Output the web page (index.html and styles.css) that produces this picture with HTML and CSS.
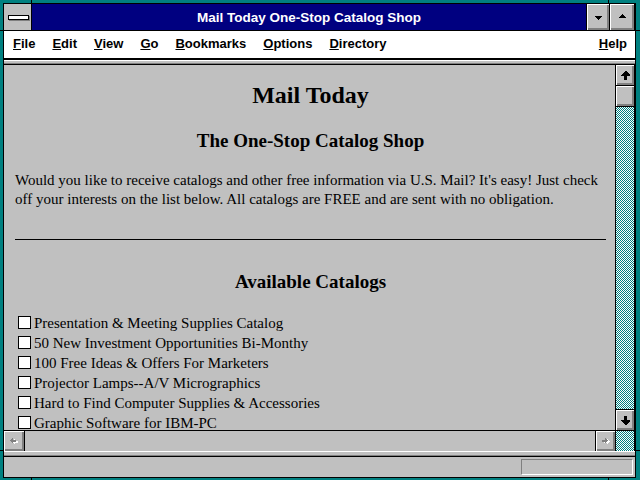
FILE: index.html
```html
<!DOCTYPE html>
<html>
<head>
<meta charset="utf-8">
<title>Mail Today One-Stop Catalog Shop</title>
<link rel="stylesheet" href="styles.css">
</head>
<body>
<div class="win">
  <div class="titlebar">
    <div class="sysbox"><span class="sysbar"></span></div>
    <div class="title">Mail Today One-Stop Catalog Shop</div>
    <div class="tbtn"><svg class="tri-down" width="7" height="4" viewBox="0 0 7 4" shape-rendering="crispEdges"><polygon points="0,0 7,0 3.5,4" fill="#000"/></svg></div>
    <div class="tbtn max"><svg class="tri-up" width="7" height="4" viewBox="0 0 7 4" shape-rendering="crispEdges"><polygon points="3.5,0 7,4 0,4" fill="#000"/></svg></div>
  </div>
  <div class="menubar">
    <span class="mi"><u>F</u>ile</span>
    <span class="mi"><u>E</u>dit</span>
    <span class="mi"><u>V</u>iew</span>
    <span class="mi"><u>G</u>o</span>
    <span class="mi"><u>B</u>ookmarks</span>
    <span class="mi"><u>O</u>ptions</span>
    <span class="mi"><u>D</u>irectory</span>
    <span class="mi help"><u>H</u>elp</span>
  </div>
  <div class="strip"></div>
  <div class="viewport">
    <div class="page">
      <h1 class="head">Mail Today</h1>
      <h2 class="sub">The One-Stop Catalog Shop</h2>
      <p class="intro">Would you like to receive catalogs and other free information via U.S. Mail? It's easy! Just check off your interests on the list below. All catalogs are FREE and are sent with no obligation.</p>
      <hr class="rule">
      <h2 class="sub sub2">Available Catalogs</h2>
      <div class="list">
        <div class="item"><span class="cb"></span>Presentation &amp; Meeting Supplies Catalog</div>
        <div class="item"><span class="cb"></span>50 New Investment Opportunities Bi-Monthy</div>
        <div class="item"><span class="cb"></span>100 Free Ideas &amp; Offers For Marketers</div>
        <div class="item"><span class="cb"></span>Projector Lamps--A/V Micrographics</div>
        <div class="item"><span class="cb"></span>Hard to Find Computer Supplies &amp; Accessories</div>
        <div class="item"><span class="cb"></span>Graphic Software for IBM-PC</div>
      </div>
    </div>
    <div class="vscroll">
      <div class="face vup"><svg width="9" height="9" viewBox="0 0 9 9" shape-rendering="crispEdges"><polygon points="4,0 5,0 9,4 9,5 6,5 6,9 3,9 3,5 0,5 0,4" fill="#000"/></svg></div>
      <div class="face vthumb"></div>
      <div class="vtrack"></div>
      <div class="face vdown"><svg width="9" height="9" viewBox="0 0 9 9" shape-rendering="crispEdges"><polygon points="3,0 6,0 6,4 9,4 9,5 5,9 4,9 0,5 0,4 3,4" fill="#000"/></svg></div>
    </div>
  </div>
  <div class="hscroll">
    <div class="face hleft"><svg width="8" height="8" viewBox="0 0 8 8" shape-rendering="crispEdges"><polygon points="1,3.5 4,0.5 4,2.5 7,2.5 7,4.5 4,4.5 4,6.5" fill="#fff" transform="translate(1,1)"/><polygon points="0,3.5 3,0.5 3,2.5 6,2.5 6,4.5 3,4.5 3,6.5" fill="#808080"/></svg></div>
    <div class="htrack"></div>
    <div class="face hright"><svg width="8" height="8" viewBox="0 0 8 8" shape-rendering="crispEdges"><polygon points="7,3.5 4,0.5 4,2.5 1,2.5 1,4.5 4,4.5 4,6.5" fill="#fff" transform="translate(1,1)"/><polygon points="6,3.5 3,0.5 3,2.5 0,2.5 0,4.5 3,4.5 3,6.5" fill="#808080"/></svg></div>
    <div class="corner"></div>
  </div>
  <div class="strip2"></div>
  <div class="status"><div class="field"></div></div>
</div>
<div class="notch n-t1"></div>
<div class="notch n-t2"></div>
<div class="notch n-b1"></div>
<div class="notch n-b2"></div>
<div class="notch n-l1"></div>
<div class="notch n-l2"></div>
<div class="notch n-r1"></div>
<div class="notch n-r2"></div>
</body>
</html>
```
FILE: styles.css
```css
html, body {
  margin: 0;
}
body {
  width: 640px;
  height: 480px;
  box-sizing: border-box;
  padding: 3px 4px 2px 3px;
  background: #008080;
  position: relative;
  overflow: hidden;
  font-family: "Liberation Sans", Arial, sans-serif;
}
.win {
  height: 100%;
  box-sizing: border-box;
  border: 1px solid #000;
  background: #c0c0c0;
  display: flex;
  flex-direction: column;
}
.win > div { flex: none; }

/* title bar */
.titlebar {
  height: 26px;
  border-bottom: 1px solid #000;
  display: flex;
}
.sysbox {
  width: 27px;
  border-right: 1px solid #000;
  background: #c0c0c0;
  display: flex;
  align-items: center;
  justify-content: center;
}
.sysbar {
  display: block;
  width: 19px;
  height: 3px;
  margin-top: 1px;
  margin-left: 1px;
  border: 1px solid #000;
  background: #fff;
  box-shadow: 1px 1px 0 #808080;
}
.title {
  flex: 1;
  background: #000080;
  color: #fff;
  font-weight: bold;
  font-size: 13.5px;
  line-height: 28px;
  text-align: center;
  white-space: nowrap;
  overflow: hidden;
}
.tbtn {
  width: 22px;
  border-left: 1px solid #000;
  background: #c0c0c0;
  box-shadow: inset 1px 1px #fff, inset -1px -1px #808080, inset -2px -2px #808080;
  display: flex;
  align-items: center;
  justify-content: center;
}
.tbtn.max {
  width: 24px;
  border-right: 1px solid #000;
}
.tri-down { margin-top: 2px; }
.tri-up { margin-bottom: 2px; }

/* menu */
.menubar {
  height: 27px;
  background: #fff;
  border-bottom: 2px solid #000;
  display: flex;
  gap: 17px;
  padding: 0 8px 0 9px;
  font-weight: bold;
  font-size: 13px;
  line-height: 26px;
  color: #000;
  white-space: nowrap;
}
.menubar u { text-decoration-thickness: 1px; }
.menubar .help { margin-left: auto; }

.strip {
  height: 2px;
  background: #c0c0c0;
  border-top: 1px solid #fff;
  border-bottom: 1px solid #808080;
}

/* viewport */
.viewport {
  height: 365px;
  border-top: 1px solid #000;
  border-bottom: 1px solid #000;
  display: flex;
}
.page {
  flex: 1;
  min-width: 0;
  background: #c0c0c0;
  padding: 16px 9px 0 11px;
  overflow: hidden;
  font-family: "Liberation Serif", "Times New Roman", serif;
  color: #000;
}
.head {
  margin: 0;
  font-size: 24px;
  line-height: 28px;
  font-weight: bold;
  text-align: center;
}
.sub {
  margin: 21px 0 0;
  font-size: 19px;
  line-height: 22px;
  font-weight: bold;
  text-align: center;
}
.intro {
  margin: 19px 0 0;
  font-size: 15px;
  line-height: 19px;
}
.rule {
  margin: 30px 0 0;
  height: 0;
  border: 0;
  border-top: 1px solid #000;
}
.sub2 { margin-top: 31px; }
.list {
  margin-top: 20px;
  font-size: 15px;
  line-height: 20px;
  white-space: nowrap;
}
.cb {
  display: inline-block;
  width: 13px;
  height: 13px;
  box-sizing: border-box;
  border: 1px solid #000;
  background: #fff;
  margin: 0 3px;
  vertical-align: -1px;
}

/* scrollbars */
.face {
  background: #c0c0c0;
  box-shadow: inset 1px 1px #fff, inset -1px -1px #808080, inset -2px -2px #808080;
  display: flex;
  align-items: center;
  justify-content: center;
  flex: none;
}
.hatch {
  background: #008080;
}
.vscroll {
  width: 18px;
  border-left: 1px solid #000;
  border-right: 1px solid #000;
  display: flex;
  flex-direction: column;
}
.vup { height: 20px; border-bottom: 1px solid #000; }
.vthumb { height: 20px; border-bottom: 1px solid #000; }
.vtrack, .corner {
  background-color: #fff;
  background-image: repeating-conic-gradient(#008080 0 25%, #fff 0 50%);
  background-size: 2px 2px;
}
.vtrack { flex: 1; }
.vdown { height: 20px; border-top: 1px solid #000; }

.hscroll {
  height: 20px;
  display: flex;
}
.hleft { width: 20px; border-right: 1px solid #000; }
.htrack { flex: 1; background: #c0c0c0; }
.hright { width: 19px; border-left: 1px solid #000; }
.corner {
  width: 18px;
  border-left: 1px solid #000;
  border-right: 1px solid #000;
}

.strip2 {
  height: 3px;
  background: #c0c0c0;
  border-top: 1px solid #fff;
  border-bottom: 1px solid #808080;
}
.status {
  height: 20px;
  border-top: 1px solid #000;
  background: #c0c0c0;
  display: flex;
  justify-content: flex-end;
}
.field {
  width: 110px;
  height: 14px;
  margin: 2px 2px 0 0;
  border-top: 1px solid #808080;
  border-left: 1px solid #808080;
  border-bottom: 1px solid #fff;
  border-right: 1px solid #fff;
}

/* frame resize notches */
.notch {
  position: absolute;
  background: #000;
}
.n-t1 { left: 31px; top: 0; width: 1px; height: 3px; }
.n-t2 { left: 608px; top: 0; width: 1px; height: 3px; }
.n-b1 { left: 31px; top: 478px; width: 1px; height: 2px; }
.n-b2 { left: 608px; top: 478px; width: 1px; height: 2px; }
.n-l1 { left: 0; top: 30px; width: 3px; height: 1px; }
.n-l2 { left: 0; top: 450px; width: 3px; height: 1px; }
.n-r1 { left: 636px; top: 30px; width: 4px; height: 1px; }
.n-r2 { left: 636px; top: 450px; width: 4px; height: 1px; }
```
